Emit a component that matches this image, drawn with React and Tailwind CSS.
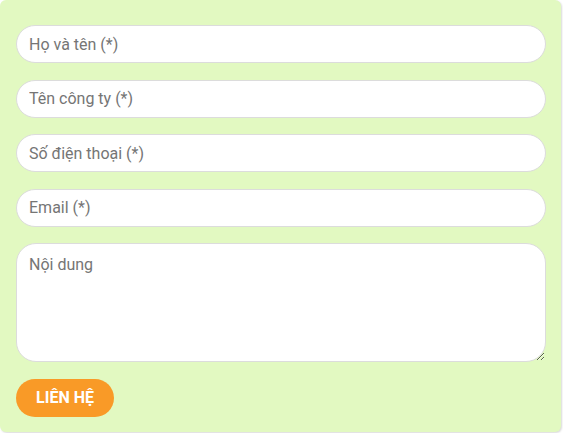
export default function App() {
  const fields = ["Họ và tên (*)", "Tên công ty (*)", "Số điện thoại (*)", "Email (*)"];

  return (
    <div className="w-[563px] h-[433px] bg-white font-['Roboto',sans-serif]">
      <form
        className="w-[561px] h-[432px] bg-[#e2f9c1] rounded-md shadow-[1px_1px_2px_rgba(0,0,0,0.15)] px-4 pt-[25px] flex flex-col gap-[16.5px]"
        onSubmit={(e) => e.preventDefault()}
      >
        {fields.map((f) => (
          <input
            key={f}
            type="text"
            placeholder={f}
            className="w-[530px] h-[38px] bg-white border border-[#dcdcdc] rounded-full px-3 text-base text-[#555] placeholder:text-[#757575] outline-none"
          />
        ))}
        <textarea
          placeholder="Nội dung"
          className="w-[530px] h-[119px] bg-white border border-[#dcdcdc] rounded-[20px] px-3 py-[9px] text-base text-[#555] placeholder:text-[#757575] outline-none"
        />
        <button
          type="submit"
          className="w-[98px] h-[38px] bg-[#f99a27] rounded-full text-white font-bold text-base"
        >
          LIÊN HỆ
        </button>
      </form>
    </div>
  );
}
